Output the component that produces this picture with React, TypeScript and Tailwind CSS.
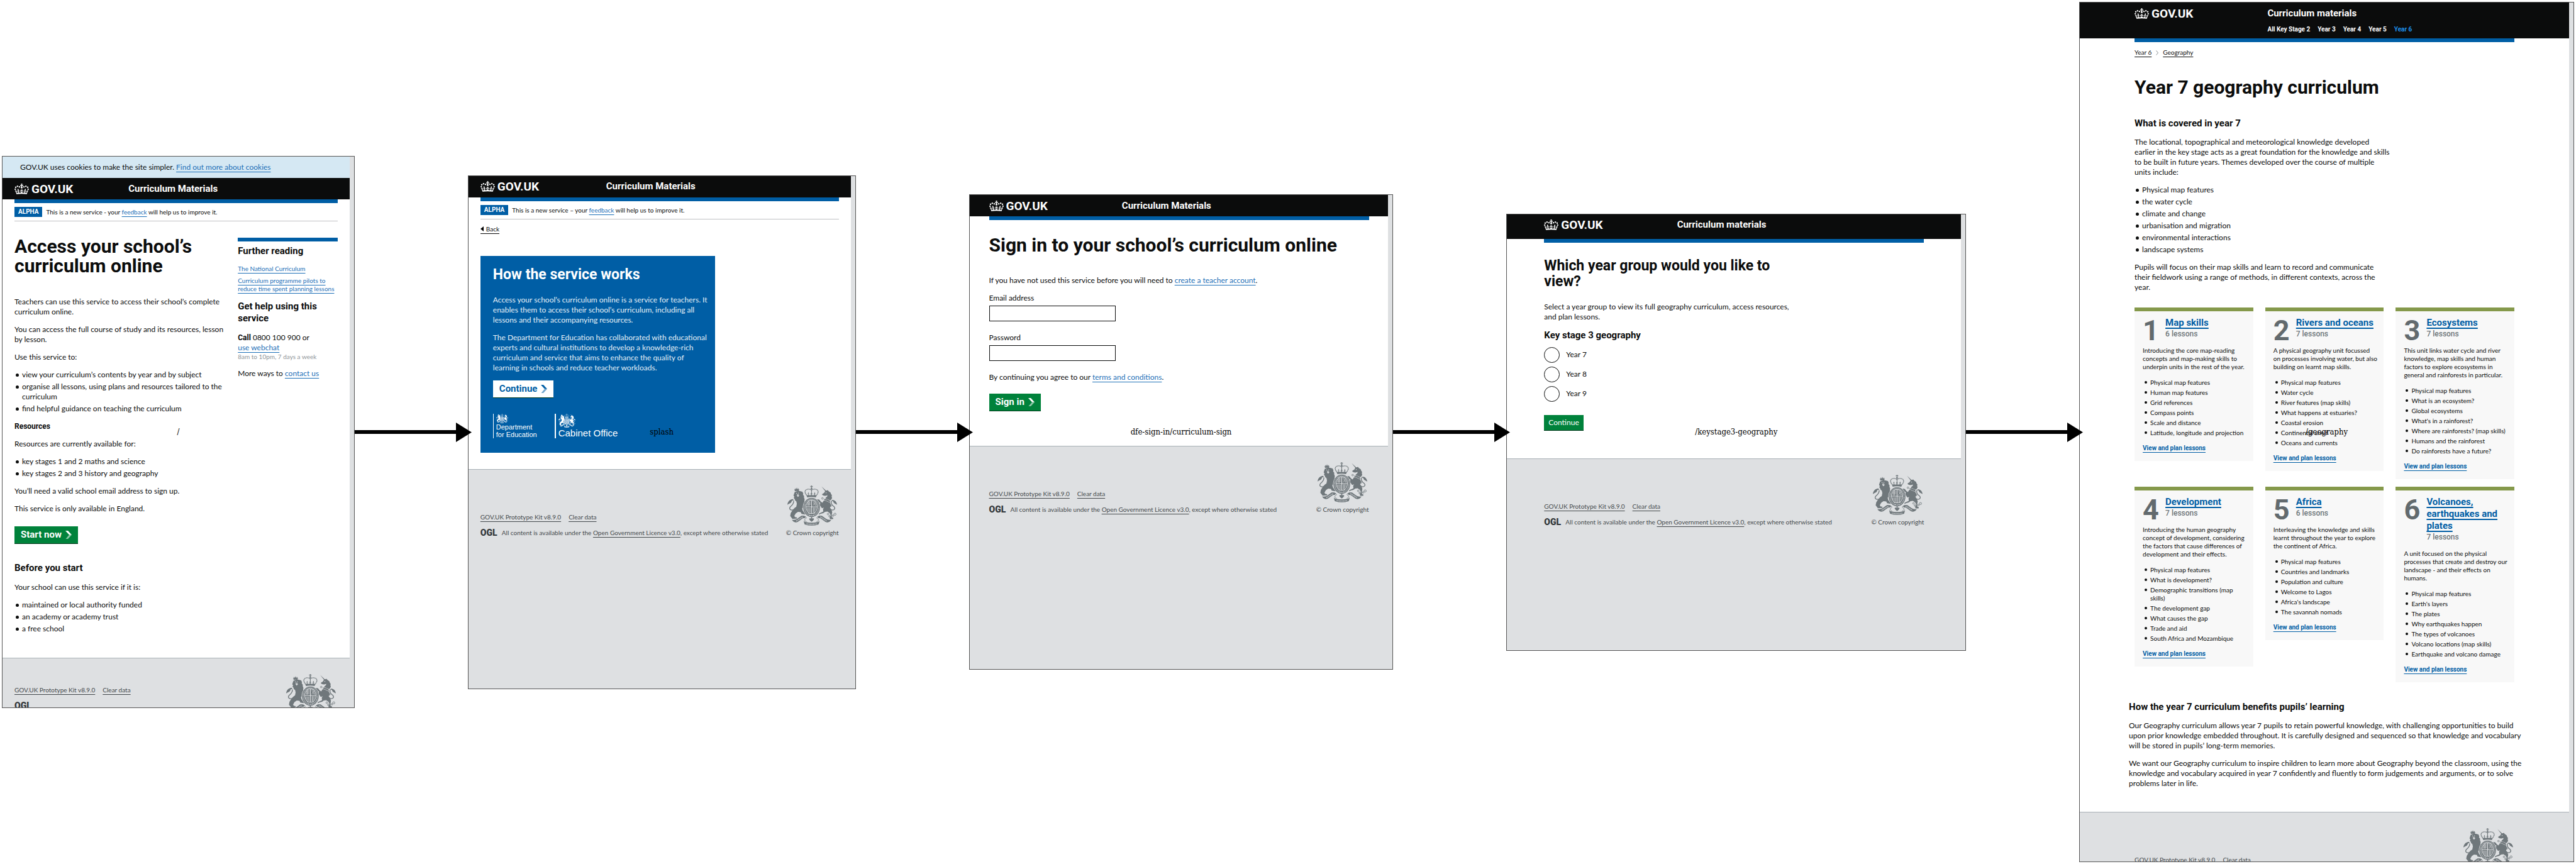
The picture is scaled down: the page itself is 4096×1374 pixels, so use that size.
import { Fragment, type ReactNode } from "react";

const BOLD = "font-[Roboto,'Liberation_Sans',sans-serif] font-bold";
const LINK = "text-[#1d70b8] underline decoration-1 underline-offset-[3px]";
const H1 = `${BOLD} text-[30px] leading-[31px]`;
const H2 = `${BOLD} text-[23px] leading-[25px]`;
const H3 = `${BOLD} text-[15px] leading-[19px]`;

/* ---------- drawings ---------- */

function Crown() {
  return (
    <svg viewBox="0 0 132 97" className="h-[17px] w-[23px]" fill="currentColor" fillRule="evenodd" aria-hidden="true">
      <path d="M25 30.2c3.5 1.5 7.7-.2 9.1-3.7 1.5-3.6-.2-7.8-3.9-9.2-3.6-1.4-7.6.3-9.1 3.9-1.4 3.5.3 7.5 3.9 9zM9 39.5c3.6 1.5 7.8-.2 9.2-3.7 1.5-3.6-.2-7.8-3.9-9.1-3.6-1.5-7.6.2-9.1 3.8-1.4 3.5.3 7.5 3.8 9zM4.4 57.2c3.5 1.5 7.7-.2 9.1-3.8 1.5-3.6-.2-7.7-3.9-9.1-3.5-1.5-7.6.3-9.1 3.8-1.4 3.5.3 7.6 3.9 9.1zm38.3-21.4c3.5 1.5 7.7-.2 9.1-3.8 1.5-3.6-.2-7.7-3.9-9.1-3.6-1.5-7.6.3-9.1 3.8-1.3 3.6.4 7.7 3.9 9.1zm64.4-5.6c-3.6 1.5-7.8-.2-9.1-3.7-1.5-3.6.2-7.8 3.8-9.2 3.6-1.4 7.7.3 9.2 3.9 1.3 3.5-.4 7.5-3.9 9zm15.9 9.3c-3.6 1.5-7.7-.2-9.1-3.7-1.5-3.6.2-7.8 3.7-9.1 3.6-1.5 7.7.2 9.2 3.8 1.5 3.5-.3 7.5-3.8 9zm4.7 17.7c-3.6 1.5-7.8-.2-9.2-3.8-1.5-3.6.2-7.7 3.9-9.1 3.6-1.5 7.7.3 9.2 3.8 1.3 3.5-.4 7.6-3.9 9.1zM89.3 35.8c-3.6 1.5-7.8-.2-9.2-3.8-1.4-3.6.2-7.7 3.9-9.1 3.6-1.5 7.7.3 9.2 3.8 1.4 3.6-.3 7.7-3.9 9.1zM69.7 17.7l8.9 4.7V9.3l-8.9 2.8c-.2-.3-.5-.6-.9-.9L72.4 0H59.6l3.5 11.2c-.3.3-.6.5-.9.9l-8.8-2.8v13.1l8.8-4.7c.3.3.6.7.9.9l-5 15.4v.1c-.2.8-.4 1.6-.4 2.4 0 4.1 3.1 7.5 7 8.1h.2c.3 0 .7.1 1 .1.4 0 .7 0 1-.1h.2c4-.6 7.1-4.1 7.1-8.1 0-.8-.1-1.7-.4-2.4V34l-5.1-15.4c.4-.2.7-.6 1-.9zM66 92.8c16.9 0 32.8 1.1 47.1 3.2 4-16.9 8.9-26.7 14-33.5l-9.6-3.4c1 4.9 1.1 7.2 0 10.2-1.5-1.4-3-4.3-4.2-8.7L108.6 76c2.8-2 5-3.2 7.5-3.3-4.4 9.4-10 11.9-13.6 11.2-4.3-.8-6.3-4.6-5.6-7.9 1-4.7 5.7-5.9 8-.5 4.3-8.7-3-11.4-7.6-8.8 7.1-7.2 7.9-13.5 2.1-21.1-8 6.1-8.1 12.3-4.5 20.8-4.7-5.4-12.1-2.5-9.5 6.2 3.4-5.2 7.9-2 7.2 3.1-.6 4.3-6.4 7.8-13.5 7.2-10.3-.9-10.9-8-11.2-13.8 2.5-.5 7.1 1.8 11 7.3L80.2 60c-4.1 4.4-8 5.3-12.3 5.4 1.4-4.4 8-11.6 8-11.6H55.5s6.4 7.2 7.9 11.6c-4.2-.1-8-1-12.3-5.4l1.4 16.4c3.9-5.5 8.5-7.7 10.9-7.3-.3 5.8-.9 12.8-11.1 13.8-7.2.6-12.9-2.9-13.5-7.2-.7-5 3.8-8.3 7.1-3.1 2.7-8.7-4.6-11.6-9.4-6.2 3.7-8.5 3.6-14.7-4.6-20.8-5.8 7.6-5 13.9 2.2 21.1-4.7-2.6-11.9.1-7.7 8.8 2.3-5.5 7.1-4.2 8.1.5.7 3.3-1.3 7.1-5.7 7.9-3.5.7-9-1.8-13.5-11.2 2.5.1 4.7 1.3 7.5 3.3l-4.7-15.4c-1.2 4.4-2.7 7.2-4.3 8.7-1.1-3-.9-5.3 0-10.2l-9.5 3.4c5 6.9 9.9 16.7 14 33.5 14.8-2.1 30.8-3.2 47.7-3.2z" />
    </svg>
  );
}

/* Royal coat of arms: `paper` is the colour showing through the cut-outs. */
function Arms({ className, paper }: { className: string; paper: string }) {
  return (
    <svg viewBox="0 0 357 308" preserveAspectRatio="none" className={className} fill="currentColor" stroke="none" aria-hidden="true">
      {/* crown */}
      <path d="M170 0h7l-2 6 7-2v8l-7-2 2 8h-7l2-8-7 2V4l7 2z" />
      <circle cx="173.500" cy="23" r="6" />
      <g fill="none" stroke="currentColor" strokeWidth="6" strokeDasharray="6 2">
        <path d="M173 37C160 22 129 26 127 47c0 14 8 22 14 32" />
        <path d="M173 37c13-15 46-11 48 10 0 14-8 22-14 32" />
      </g>
      <path d="M171 28h5v46h-5zM148 76l3-12-6 2 6-14 6 14-6-2 5 12zM168 76l3-12-6 2 8-16 8 16-6-2 3 12zM190 76l5-12-6 2 7-14 6 14-6-2 4 12z" />
      <path d="M138 74h71l-4 17q-32-7-63 0z" />
      {/* lion */}
      <path d="M50 28l6 5-2-12 9 8 5-13 5 13 9-8-2 12 6-5-5 16q-15-5-27 1z" />
      <path d="M52 52 66 44l20-2 22 6 6 14-2 8 8 12-1 10 5 14-2 12 4 10-8 8 4 14 10 12 2 12-16-8-12 10 4 16 10 14 16 8-8 8-26-4-6-14-20-2-16 12-10 18 4 10 16 4-4 8-30 2-10-14-6-8 4-22 14-24 14-16 12-10 4-22-4-18-8-6-4-12-6-8 4-10-6-8 4-14z" />
      <g fill={paper}>
        <circle cx="66" cy="60" r="3" />
        <circle cx="80" cy="58" r="3" />
        <path d="M70 66h10l4 14-8 8-8-10z" />
      </g>
      <path d="M72 70h7l-2 8z" />
      <g fill="none" stroke="currentColor" strokeWidth="6">
        <path d="M46 184c-22 12-38-4-24-22 16-12 26-32 22-44" />
        <path d="M311 184c26 12 36-8 24-22-16-12-26-26-18-44" />
      </g>
      <path d="M0 148c2-20 14-42 40-43l6 10c-10-2-16 2-16 10-8 14-16 12-30 23z" />
      <path d="M357 148c-2-20-14-36-34-37l-8 10c10-4 16 0 16 8 8 12 12 10 26 19z" />
      {/* unicorn */}
      <path d="M245 7 280 42l-6 5z" />
      <path d="M250 66l14-10 8-14 18-6 8 10 12 8 4 12 6 8-2 12 3 10-6 12-7 6-36-16 14-14 2-10-14 6-12-2-12-6z" />
      <circle cx="278" cy="56" r="3" fill={paper} />
      <path d="M266 102l8 4 4-8 6 12 5-8 5 12 5-6 8 16v6l-44-20z" />
      <path d="M260 118l8-4 38 18 8 20-8 18 10 14 6 20-4 24 2 16 10 4-2 10h-22l-2-12 8-16-8-18-16-12-18 2-12 10-18 4-14 8 2-10 30-14-2-18 6-14-10 6-8-4-4-10-8-2-2-12 8-12-10-4-8-10-8 2-2-10 8-6 12 4 10 14 12 8z" />
      <g fill="none" stroke="currentColor" strokeWidth="4">
        <circle cx="252" cy="99" r="6" />
        <circle cx="311" cy="155" r="6" />
        <circle cx="292" cy="219" r="6" />
        <circle cx="303" cy="235" r="6" />
        <circle cx="328" cy="231" r="6" />
        <circle cx="342" cy="220" r="8" />
      </g>
      {/* garter and quartered shield */}
      <ellipse cx="174" cy="168" rx="63" ry="76" fill={paper} />
      <ellipse cx="174" cy="168" rx="60" ry="73" />
      <ellipse cx="174" cy="168" rx="51" ry="64" fill="none" stroke={paper} strokeWidth="9" strokeDasharray="3 6" />
      <ellipse cx="174" cy="164" rx="43" ry="54" fill={paper} />
      <ellipse cx="174" cy="164" rx="39" ry="50" />
      <g fill="none" stroke={paper} strokeWidth="3">
        <path d="M174 114v100M135 164h78" strokeWidth="5" />
        <path d="M145 136h24M142 146h27M150 126h19M156 124v34M148 130v28" />
        <path d="M182 122q20 8 24 32M186 132l16 24M184 154l16-24" />
        <path d="M142 172v20M150 172v28M158 172v34M164 172v38" />
        <path d="M182 174h26M182 184h24M182 194h18M182 204h12M190 170v38" />
        <path d="M150 214h48" />
      </g>
      <g fill={paper}>
        <circle cx="160" cy="228" r="3" />
        <circle cx="174" cy="231" r="3" />
        <circle cx="188" cy="228" r="3" />
      </g>
      <path d="M170 240h8v14l8-4 6 8-8 12-10 8-10-8-8-12 6-8 8 4z" />
      {/* motto scroll */}
      <path d="M32 262q24 4 40-8l28-22q18-4 32 6l-8 14q-8-6-20 4l-28 22q-18 10-34-2z" />
      <path d="M316 262q-24 4-40-8l-28-22q-18-4-32 6l8 14q8-6 20 4l28 22q18 10 34-2z" />
      <path d="M118 268q4 12 14 12 42 10 84 0 10 0 14-12 0 16-6 30-50 18-100 0-6-14-6-30z" />
      <g fill="none" stroke="currentColor" strokeWidth="4">
        <path d="M126 240c18 4 10 12 0 18-6 8 2 14 12 20M222 240c-18 4-10 12 0 18 6 8-2 14-12 20" />
      </g>
      <g fill="none" stroke={paper} strokeWidth="8" strokeDasharray="4 4">
        <path d="M64 272 112 240M236 240l48 32M138 294q36 6 74 0" />
      </g>
    </svg>
  );
}

function Chevron() {
  return (
    <svg viewBox="0 0 10 13" className="h-[13px] w-[10px]" fill="currentColor" aria-hidden="true">
      <path d="M0 0h4l6 6.500H6z" />
      <path d="M6 6.500h4L4 13H.500z" opacity=".55" />
    </svg>
  );
}

/* ---------- flow pieces ---------- */

function Arrow() {
  return (
    <div className="min-w-0 flex-[180_1_0%]">
      <div className="relative z-10 -mr-[6px] flex items-center text-black">
        <div className="h-[6px] flex-1 bg-black" />
        <svg viewBox="0 0 25 31" className="h-[31px] w-[25px] shrink-0" fill="currentColor" aria-hidden="true">
          <path d="M0 0 25 15.500 0 31z" />
        </svg>
      </div>
    </div>
  );
}

function Frame({ width, height, label, children }: { width: string; height: string; label: string; children: ReactNode }) {
  return (
    <section className={`relative min-w-0 ${width}`}>
      <div className={`overflow-hidden border border-[#555] bg-[#dee0e2] pr-[7px] ${height}`}>{children}</div>
      <p className="absolute top-1/2 left-1/2 -translate-x-1/2 -translate-y-1/2 whitespace-nowrap font-['DejaVu_Serif_Condensed','DejaVu_Serif',serif] text-[13px] leading-4 text-black">
        {label}
      </p>
    </section>
  );
}

function Container({ className = "", children }: { className?: string; children: ReactNode }) {
  return (
    <div className={`px-[19px] ${className}`}>
      <div className="mx-auto max-w-[604px]">{children}</div>
    </div>
  );
}

function Header({ title, className = "", children }: { title: string; className?: string; children?: ReactNode }) {
  return (
    <header className={`bg-[#0b0c0c] text-white ${className}`}>
      <Container>
        <div className="flex h-[34px] items-center">
          <a href="#home" className={`flex w-1/3 items-center gap-1 ${BOLD} text-[19px] leading-[19px]`}>
            <Crown />
            GOV.UK
          </a>
          <a href="#service" className={`ml-[10px] ${H3}`}>
            {title}
          </a>
        </div>
        {children}
      </Container>
    </header>
  );
}

function Body({ className = "", children }: { className?: string; children: ReactNode }) {
  return (
    <Container className={`bg-white ${className}`}>
      <div className="h-[6px] bg-[#005ea5]" />
      {children}
    </Container>
  );
}

function PhaseBanner({ dash }: { dash: string }) {
  return (
    <div className="flex items-center gap-[6px] border-b border-[#bfc1c3] py-[6px] text-[10px] leading-4">
      <strong className={`${BOLD} bg-[#005ea5] px-[6px] text-white`}>ALPHA</strong>
      <span>
        This is a new service {dash} your <a href="#feedback" className={LINK}>feedback</a> will help us to improve it.
      </span>
    </div>
  );
}

function Footer({ raised = false }: { raised?: boolean }) {
  const link = "underline decoration-1 underline-offset-[3px]";
  return (
    <footer className="border-t border-[#a9b1b6] pt-[25px] text-[10px] leading-[13px] text-[#454a4d]">
      <Container>
        <div className="flex items-end justify-between">
          <div className={raised ? "pb-[25px]" : ""}>
            <nav className="flex gap-3">
              <a href="#kit" className={link}>GOV.UK Prototype Kit v8.9.0</a>
              <a href="#clear" className={link}>Clear data</a>
            </nav>
            <div className="mt-3 flex items-center gap-[7px] whitespace-nowrap">
              <span className="w-[27px] font-[Roboto,sans-serif] text-[14px] leading-[13px] font-black text-[#33383b]">OGL</span>
              {!raised && (
                <span>
                  All content is available under the{" "}
                  <a href="#licence" className={link}>Open Government Licence v3.0</a>, except where otherwise stated
                </span>
              )}
            </div>
          </div>
          <div className="flex flex-col items-center gap-[5px]">
            <Arms className="h-[64px] w-[79px] text-[#6f777b]" paper="#dee0e2" />
            <a href="#crown">© Crown copyright</a>
          </div>
        </div>
      </Container>
    </footer>
  );
}

function Lines({ lines }: { lines: ReactNode[] }) {
  return (
    <>
      {lines.map((l, i) => (
        <Fragment key={i}>
          {i > 0 && <br />}
          {l}
        </Fragment>
      ))}
    </>
  );
}

function P({ lines, className = "mt-3" }: { lines: ReactNode[]; className?: string }) {
  return (
    <p className={`${className} whitespace-nowrap`}>
      <Lines lines={lines} />
    </p>
  );
}

function Bullets({ items }: { items: string[][] }) {
  return (
    <ul className="mt-3 flex flex-col gap-[3px]">
      {items.map((lines) => (
        <li key={lines[0]} className="flex">
          <span className="mt-[6px] mr-[5px] ml-[2px] size-[5px] shrink-0 rounded-full bg-[#0b0c0c]" />
          <span className="whitespace-nowrap">
            <Lines lines={lines} />
          </span>
        </li>
      ))}
    </ul>
  );
}

const BUTTON = `${H3} flex h-[28px] items-center gap-[6px] border-b px-[10px]`;

/* ---------- pages ---------- */

function StartPage() {
  return (
    <Frame label="/" width="flex-[561_1_0%]" height="h-[878px]">
      <div className="bg-[#d5e8f3] px-7 leading-[34px]">
        GOV.UK uses cookies to make the site simpler. <a href="#cookies" className={LINK}>Find out more about cookies</a>
      </div>
      <Header title="Curriculum Materials" />
      <Body className="pb-[38px]">
        <PhaseBanner dash="-" />
        <div className="mt-6 grid grid-cols-3 gap-[19px]">
          <div className="col-span-2 min-w-0">
            <h1 className={`${H1} whitespace-nowrap`}>
              <Lines lines={["Access your school’s", "curriculum online"]} />
            </h1>
            <P className="mt-[34px]" lines={["Teachers can use this service to access their school’s complete", "curriculum online."]} />
            <P lines={["You can access the full course of study and its resources, lesson", "by lesson."]} />
            <P lines={["Use this service to:"]} />
            <Bullets
              items={[
                ["view your curriculum’s contents by year and by subject"],
                ["organise all lessons, using plans and resources tailored to the", "curriculum"],
                ["find helpful guidance on teaching the curriculum"],
              ]}
            />
            <h2 className={`${BOLD} mt-3`}>Resources</h2>
            <P lines={["Resources are currently available for:"]} />
            <Bullets items={[["key stages 1 and 2 maths and science"], ["key stages 2 and 3 history and geography"]]} />
            <P lines={["You’ll need a valid school email address to sign up."]} />
            <P lines={["This service is only available in England."]} />
            <button type="button" className={`${BUTTON} mt-5 border-[#003618] bg-[#00823b] text-white`}>
              Start now <Chevron />
            </button>
            <h2 className={`${H3} mt-[29px]`}>Before you start</h2>
            <P className="mt-[13px]" lines={["Your school can use this service if it is:"]} />
            <Bullets items={[["maintained or local authority funded"], ["an academy or academy trust"], ["a free school"]]} />
          </div>
          <aside className="mt-[2px] min-w-0 self-start border-t-[6px] border-[#005ea5] pt-[6px]">
            <h2 className={H3}>Further reading</h2>
            <ul className="mt-3 flex flex-col gap-[6px] whitespace-nowrap text-[10px] leading-[13px]">
              <li>
                <a href="#national" className={LINK}>The National Curriculum</a>
              </li>
              <li>
                <a href="#pilots" className={LINK}>
                  <Lines lines={["Curriculum programme pilots to", "reduce time spent planning lessons"]} />
                </a>
              </li>
            </ul>
            <h2 className={`${H3} mt-3`}>Get help using this service</h2>
            <p className="mt-[13px]">
              <strong className={BOLD}>Call</strong> 0800 100 900 or
              <br />
              <a href="#webchat" className={LINK}>use webchat</a>
            </p>
            <p className="text-[10px] leading-[13px] text-[#8f9599]">8am to 10pm, 7 days a week</p>
            <p className="mt-3">
              More ways to <a href="#contact" className={LINK}>contact us</a>
            </p>
          </aside>
        </div>
      </Body>
      <Footer raised />
    </Frame>
  );
}

function SplashPage() {
  return (
    <Frame label="splash" width="flex-[617_1_0%]" height="min-h-[817px]">
      <Header title="Curriculum Materials" />
      <Body className="pb-[26px]">
        <PhaseBanner dash="–" />
        <a href="#back" className="mt-[9px] flex w-fit items-center gap-1 border-b border-[#0b0c0c] text-[10px] leading-[13px]">
          <svg viewBox="0 0 5 8" className="h-2 w-[5px]" aria-hidden="true">
            <path d="M5 0v8L0 4z" />
          </svg>
          Back
        </a>
        <div className="mt-[35px] grid grid-cols-3 gap-[19px]">
          <article className="col-span-2 bg-[#005ea5] px-5 pt-[17px] pb-[23px] text-[#e4eef6]">
            <h1 className={`${H2} text-white`}>How the service works</h1>
            <P
              className="mt-5"
              lines={[
                "Access your school’s curriculum online is a service for teachers. It",
                "enables them to access their school’s curriculum, including all",
                "lessons and their accompanying resources.",
              ]}
            />
            <P
              lines={[
                "The Department for Education has collaborated with educational",
                "experts and cultural institutions to develop a knowledge-rich",
                "curriculum and service that aims to enhance the quality of",
                "learning in schools and reduce teacher workloads.",
              ]}
            />
            <button type="button" className={`${BUTTON} mt-3 border-[#003618] bg-white text-[#005ea5]`}>
              Continue <Chevron />
            </button>
            <div className="mt-[25px] flex gap-[28px] whitespace-nowrap font-['Liberation_Sans',Arial,sans-serif] text-white">
              <div className="flex h-[39px] flex-col justify-between border-l border-white pl-[4px] text-[11px] leading-[12px]">
                <Arms className="h-[15px] w-[19px]" paper="#005ea5" />
                <span>
                  Department
                  <br />
                  for Education
                </span>
              </div>
              <div className="flex h-[39px] flex-col justify-between border-l-2 border-white pl-[4px] text-[15px] leading-4">
                <Arms className="h-[22px] w-[27px]" paper="#005ea5" />
                Cabinet Office
              </div>
            </div>
          </article>
        </div>
      </Body>
      <Footer />
    </Frame>
  );
}

function Field({ id, label, type }: { id: string; label: string; type: string }) {
  return (
    <div className="flex flex-col gap-1">
      <label htmlFor={id}>{label}</label>
      <input id={id} type={type} className="h-[25px] w-[201px] border border-[#0b0c0c] bg-white px-1 outline-none" />
    </div>
  );
}

function SignInPage() {
  return (
    <Frame label="dfe-sign-in/curriculum-sign" width="flex-[675_1_0%]" height="min-h-[756px]">
      <Header title="Curriculum Materials" />
      <Body className="pb-[55px]">
        <h1 className={`${H1} mt-6 whitespace-nowrap`}>Sign in to your school’s curriculum online</h1>
        <p className="mt-[33px]">
          If you have not used this service before you will need to{" "}
          <a href="#create" className={LINK}>create a teacher account</a>.
        </p>
        <form className="mt-3 flex flex-col gap-[18px]">
          <Field id="email" label="Email address" type="email" />
          <Field id="password" label="Password" type="password" />
          <p>
            By continuing you agree to our <a href="#terms" className={LINK}>terms and conditions</a>.
          </p>
          <button type="button" className={`${BUTTON} w-fit border-[#003618] bg-[#00823b] text-white`}>
            Sign in <Chevron />
          </button>
        </form>
      </Body>
      <Footer />
    </Frame>
  );
}

function YearGroupPage() {
  return (
    <Frame label="/keystage3-geography" width="flex-[731_1_0%]" height="min-h-[695px]">
      <Header title="Curriculum materials" className="pb-[5px]" />
      <Body className="pb-[44px]">
        <h1 className={`${H2} mt-6 whitespace-nowrap`}>
          <Lines lines={["Which year group would you like to", "view?"]} />
        </h1>
        <P className="mt-5" lines={["Select a year group to view its full geography curriculum, access resources,", "and plan lessons."]} />
        <form>
          <fieldset className="mt-3">
            <legend className={H3}>Key stage 3 geography</legend>
            <div className="mt-[9px] flex flex-col gap-[6px]">
              {["Year 7", "Year 8", "Year 9"].map((y) => (
                <label key={y} className="flex w-fit items-center gap-[10px]">
                  <input type="radio" name="year" className="size-[25px] appearance-none rounded-full border border-[#0b0c0c] bg-white" />
                  {y}
                </label>
              ))}
            </div>
          </fieldset>
          <button type="button" className="mt-[21px] h-[25px] border-b border-[#003618] bg-[#00823b] px-[7px] text-white">
            Continue
          </button>
        </form>
      </Body>
      <Footer />
    </Frame>
  );
}

type Unit = { title: string[]; lessons: number; text: string[]; topics: string[][] };

const UNITS: Unit[] = [
  {
    title: ["Map skills"],
    lessons: 6,
    text: ["Introducing the core map-reading", "concepts and map-making skills to", "underpin units in the rest of the year."],
    topics: [["Physical map features"], ["Human map features"], ["Grid references"], ["Compass points"], ["Scale and distance"], ["Latitude, longitude and projection"]],
  },
  {
    title: ["Rivers and oceans"],
    lessons: 7,
    text: ["A physical geography unit focussed", "on processes involving water, but also", "building on learnt map skills."],
    topics: [["Physical map features"], ["Water cycle"], ["River features (map skills)"], ["What happens at estuaries?"], ["Coastal erosion"], ["Continental shelf"], ["Oceans and currents"]],
  },
  {
    title: ["Ecosystems"],
    lessons: 7,
    text: ["This unit links water cycle and river", "knowledge, map skills and human", "factors to explore ecosystems in", "general and rainforests in particular."],
    topics: [["Physical map features"], ["What is an ecosystem?"], ["Global ecosystems"], ["What's in a rainforest?"], ["Where are rainforests? (map skills)"], ["Humans and the rainforest"], ["Do rainforests have a future?"]],
  },
  {
    title: ["Development"],
    lessons: 7,
    text: ["Introducing the human geography", "concept of development, considering", "the factors that cause differences of", "development and their effects."],
    topics: [["Physical map features"], ["What is development?"], ["Demographic transitions (map", "skills)"], ["The development gap"], ["What causes the gap"], ["Trade and aid"], ["South Africa and Mozambique"]],
  },
  {
    title: ["Africa"],
    lessons: 6,
    text: ["Interleaving the knowledge and skills", "learnt throughout the year to explore", "the continent of Africa."],
    topics: [["Physical map features"], ["Countries and landmarks"], ["Population and culture"], ["Welcome to Lagos"], ["Africa's landscape"], ["The savannah nomads"]],
  },
  {
    title: ["Volcanoes,", "earthquakes and", "plates"],
    lessons: 7,
    text: ["A unit focused on the physical", "processes that create and destroy our", "landscape - and their effects on", "humans."],
    topics: [["Physical map features"], ["Earth's layers"], ["The plates"], ["Why earthquakes happen"], ["The types of volcanoes"], ["Volcano locations (map skills)"], ["Earthquake and volcano damage"]],
  },
];

function UnitCard({ unit, index }: { unit: Unit; index: number }) {
  return (
    <article className="min-w-0 self-start border-t-[6px] border-[#85994b] bg-[#f8f8f8] px-[13px] pt-[9px] pb-[14px] text-[10px] leading-[13px] whitespace-nowrap">
      <div className="flex">
        <span className={`${BOLD} h-[35px] w-9 text-[45px] leading-[43px] text-[#626a6e]`}>{index}</span>
        <div>
          <h3 className={H3}>
            <a href={`#unit-${index}`} className="text-[#005ea5] underline decoration-2 underline-offset-[3px]">
              <Lines lines={unit.title} />
            </a>
          </h3>
          <p className="font-[Roboto,'Liberation_Sans',sans-serif] text-[12px] leading-4 font-medium text-[#6f777b]">{unit.lessons} lessons</p>
        </div>
      </div>
      <P lines={unit.text} />
      <ul className="mt-3 flex flex-col gap-[3px]">
        {unit.topics.map((t) => (
          <li key={t[0]} className="flex">
            <span className="mt-[4px] mr-[5px] ml-[3px] size-[4px] shrink-0 rounded-full bg-[#0b0c0c]" />
            <span>
              <Lines lines={t} />
            </span>
          </li>
        ))}
      </ul>
      <a href={`#lessons-${index}`} className={`${BOLD} mt-[11px] block text-[#005ea5] underline decoration-1 underline-offset-[3px]`}>
        View and plan lessons
      </a>
    </article>
  );
}

function GeographyPage() {
  return (
    <Frame label="/geography" width="flex-[787_1_0%]" height="h-[1368px]">
      <Header title="Curriculum materials" className="pb-2">
        <nav className={`${BOLD} mt-[2px] ml-[33.333%] flex gap-3 pl-[10px] text-[10px] leading-[13px]`}>
          {["All Key Stage 2", "Year 3", "Year 4", "Year 5"].map((n) => (
            <a key={n} href="#year">{n}</a>
          ))}
          <a href="#year-6" className="text-[#1d8feb]">Year 6</a>
        </nav>
      </Header>
      <Body className="pb-[37px]">
        <nav className="mt-[10px] flex items-center gap-[7px] text-[10px] leading-[13px]">
          <a href="#year-6" className="underline decoration-1 underline-offset-[3px]">Year 6</a>
          <svg viewBox="0 0 4 8" className="h-2 w-1" fill="none" stroke="#8a9093" aria-hidden="true">
            <path d="M.500.500 3.500 4 .500 7.500" />
          </svg>
          <a href="#geography" className="underline decoration-1 underline-offset-[3px]">Geography</a>
        </nav>
        <h1 className={`${H1} mt-[33px]`}>Year 7 geography curriculum</h1>
        <h2 className={`${H3} mt-[33px]`}>What is covered in year 7</h2>
        <P
          lines={[
            "The locational, topographical and meteorological knowledge developed",
            "earlier in the key stage acts as a great foundation for the knowledge and skills",
            "to be built in future years. Themes developed over the course of multiple",
            "units include:",
          ]}
        />
        <Bullets
          items={[["Physical map features"], ["the water cycle"], ["climate and change"], ["urbanisation and migration"], ["environmental interactions"], ["landscape systems"]]}
        />
        <P
          lines={[
            "Pupils will focus on their map skills and learn to record and communicate",
            "their fieldwork using a range of methods, in different contexts, across the",
            "year.",
          ]}
        />
        <div className="mt-6 grid grid-cols-3 gap-x-[19px] gap-y-3">
          {UNITS.map((u, i) => (
            <UnitCard key={u.title[0]} unit={u} index={i + 1} />
          ))}
        </div>
        <section className="-mx-[9px] mt-[30px]">
          <h2 className={H3}>How the year 7 curriculum benefits pupils’ learning</h2>
          <P
            lines={[
              "Our Geography curriculum allows year 7 pupils to retain powerful knowledge, with challenging opportunities to build",
              "upon prior knowledge embedded throughout. It is carefully designed and sequenced so that knowledge and vocabulary",
              "will be stored in pupils’ long-term memories.",
            ]}
          />
          <P
            lines={[
              "We want our Geography curriculum to inspire children to learn more about Geography beyond the classroom, using the",
              "knowledge and vocabulary acquired in year 7 confidently and fluently to form judgements and arguments, or to solve",
              "problems later in life.",
            ]}
          />
        </section>
      </Body>
      <Footer />
    </Frame>
  );
}

export default function App() {
  return (
    <main className="flex min-h-screen items-center bg-white px-[3px] font-[Lato,'Liberation_Sans',sans-serif] text-[12px] leading-4 text-[#0b0c0c]">
      <StartPage />
      <Arrow />
      <SplashPage />
      <Arrow />
      <SignInPage />
      <Arrow />
      <YearGroupPage />
      <Arrow />
      <GeographyPage />
    </main>
  );
}
